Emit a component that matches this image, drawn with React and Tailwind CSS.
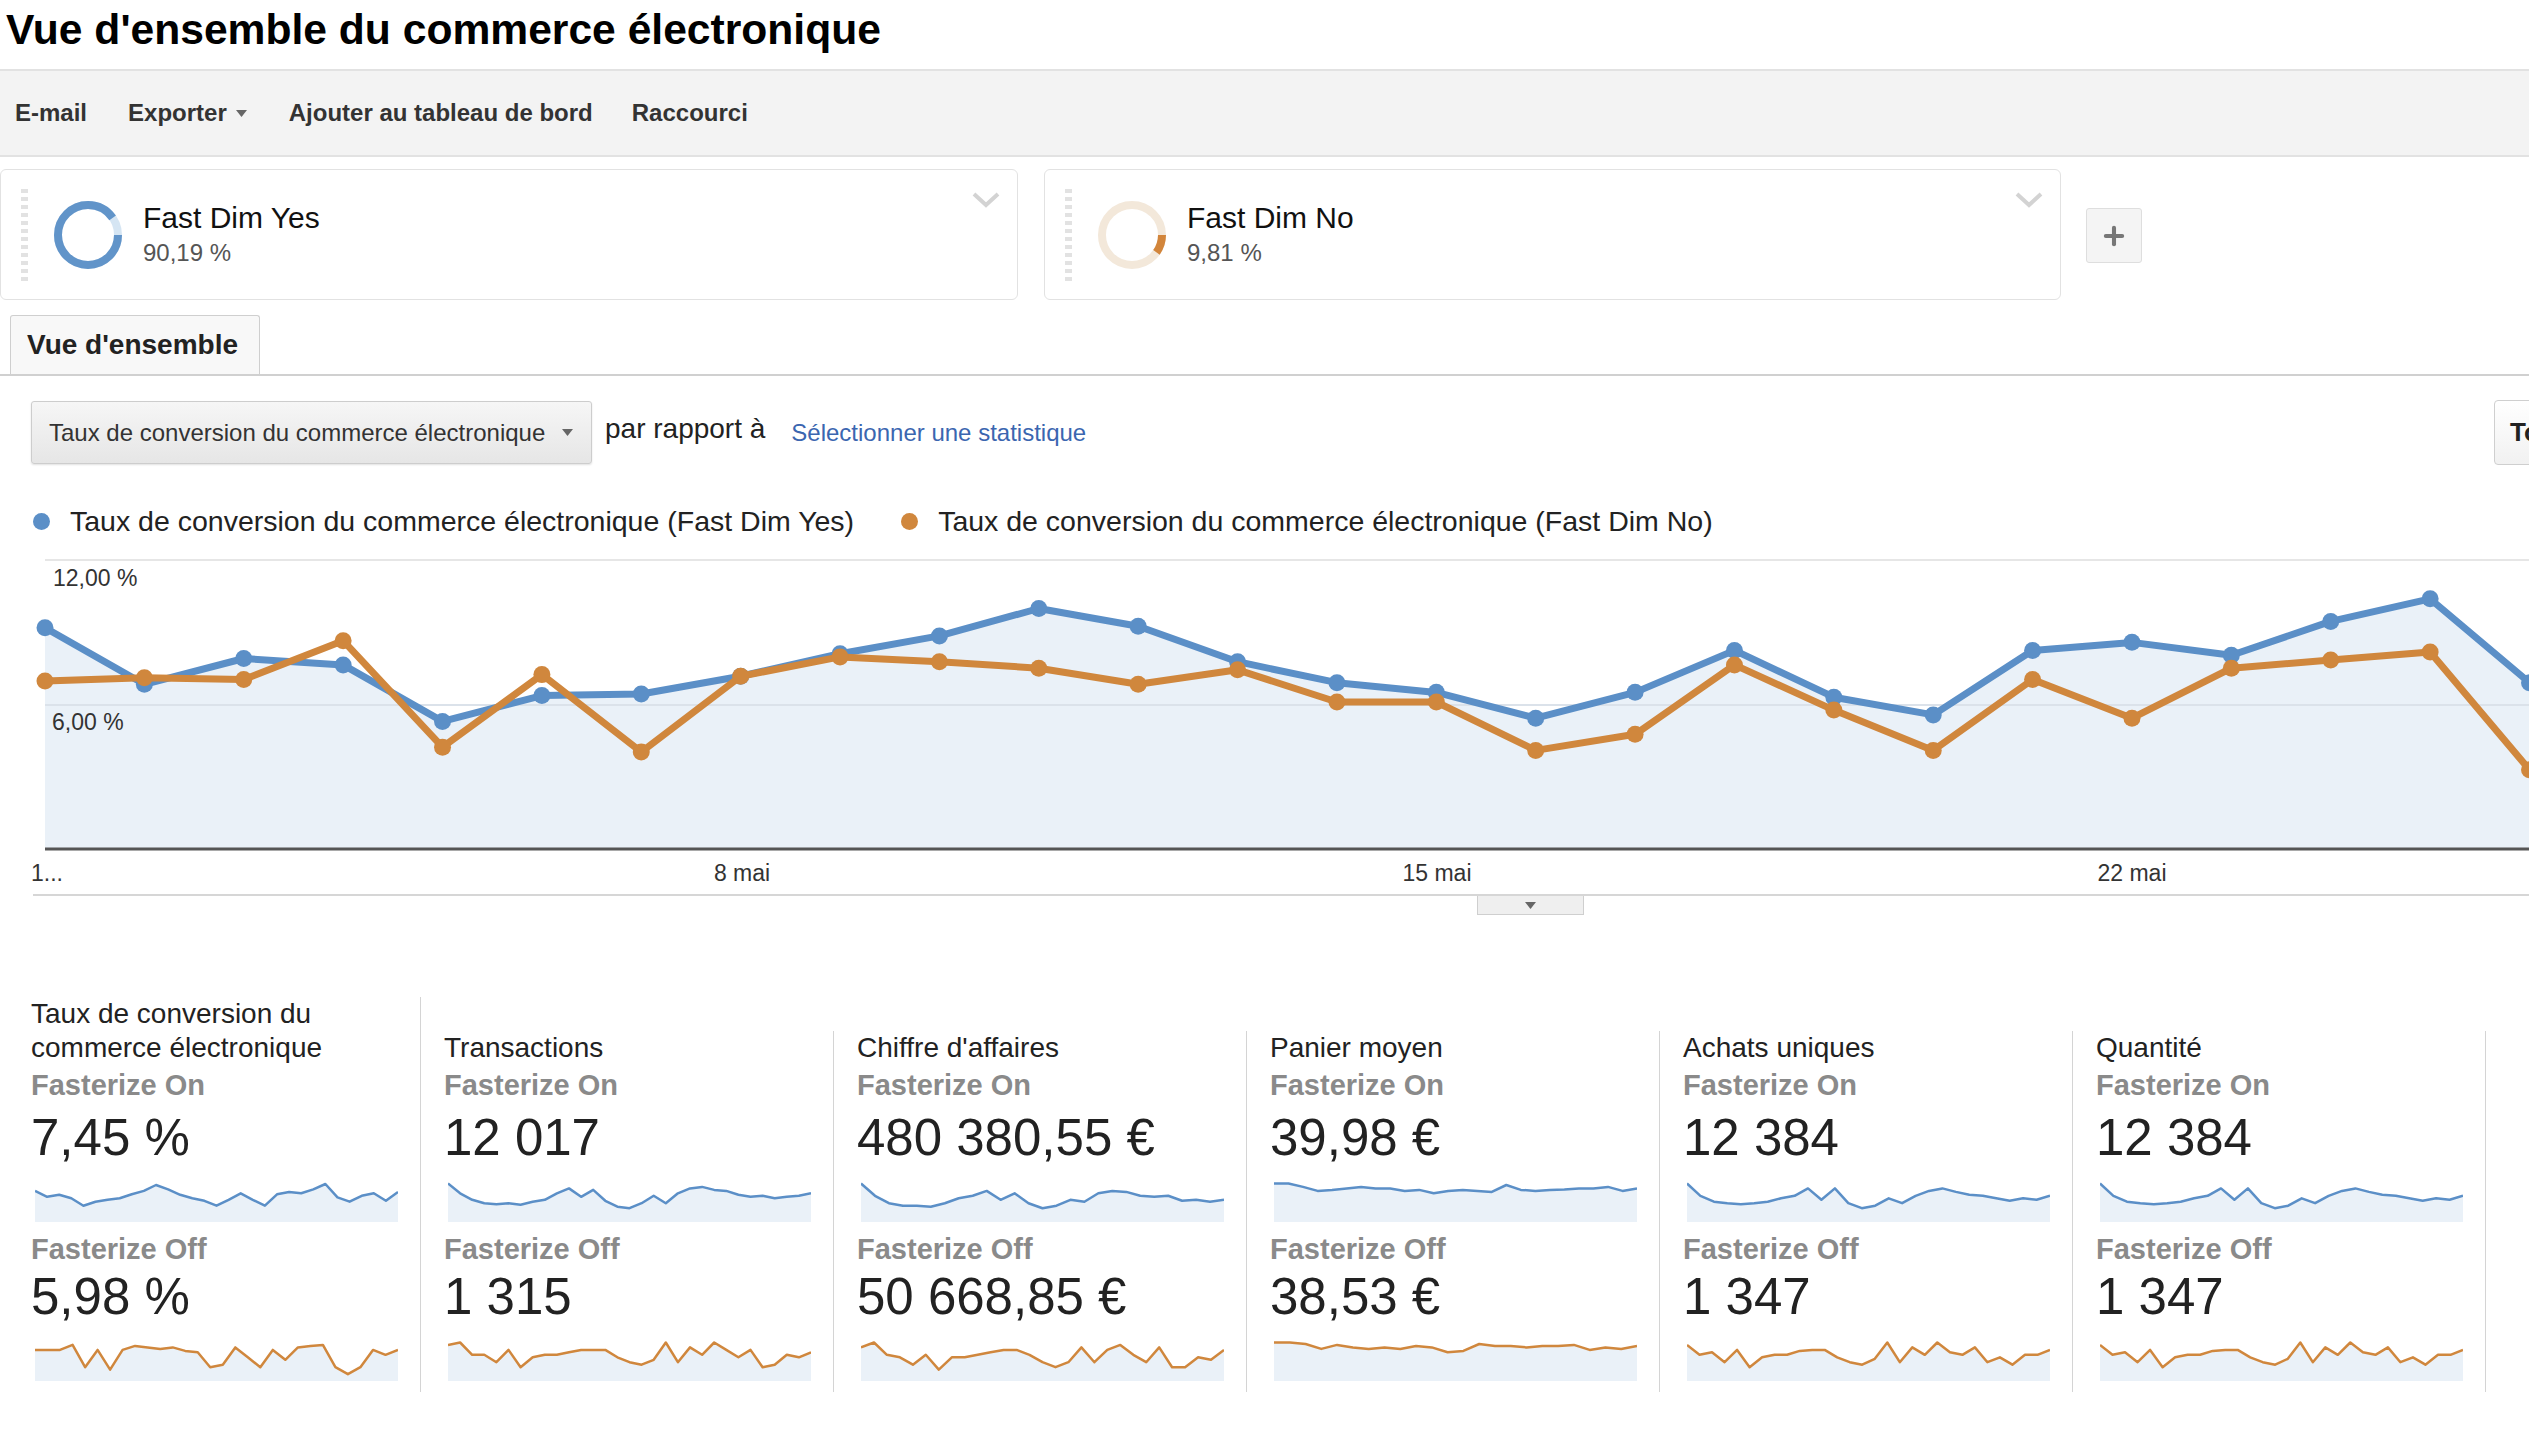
import { Plus } from 'lucide-react';

const BLUE = '#5b8fc7';
const ORANGE = '#d0873d';
const FILL = '#eaf1f8';

// y positions read off the reference (shrunk scale), mapped to chart px
const MAIN_BLUE = [388, 423, 407, 411, 446, 430, 429, 418, 404, 393, 376, 387, 409, 422, 428, 444, 428, 402, 431, 442, 402, 397, 405, 384, 370, 422];
const MAIN_ORANGE = [421, 419, 420, 396, 462, 417, 465, 418, 406, 409, 413, 423, 414, 434, 434, 464, 454, 411, 439, 464, 420, 444, 413, 408, 403, 476];

const toX = (i) => 45 + i * 99.38;
const toY = (s) => s * 1.613 - 556;
const BASE = 291;

const CARDS = [
  {
    title: 'Taux de conversion du commerce électronique',
    on: '7,45 %',
    off: '5,98 %',
    a: [0.2, 0.32, 0.28, 0.35, 0.5, 0.42, 0.38, 0.35, 0.27, 0.2, 0.08, 0.17, 0.28, 0.35, 0.4, 0.5, 0.38, 0.25, 0.38, 0.5, 0.27, 0.22, 0.25, 0.17, 0.06, 0.33, 0.42, 0.3, 0.25, 0.4, 0.22],
    b: [0.2, 0.2, 0.2, 0.1, 0.55, 0.2, 0.6, 0.2, 0.12, 0.15, 0.18, 0.15, 0.22, 0.25, 0.55, 0.5, 0.15, 0.35, 0.55, 0.2, 0.4, 0.15, 0.12, 0.1, 0.55, 0.7, 0.55, 0.2, 0.3, 0.2],
  },
  {
    title: 'Transactions',
    on: '12 017',
    off: '1 315',
    a: [0.05, 0.25, 0.38, 0.45, 0.47, 0.45, 0.48, 0.42, 0.38, 0.25, 0.15, 0.32, 0.18, 0.4, 0.52, 0.55, 0.45, 0.3, 0.45, 0.25, 0.15, 0.12, 0.18, 0.2, 0.28, 0.32, 0.3, 0.35, 0.32, 0.3, 0.25],
    b: [0.1, 0.05, 0.3, 0.3, 0.45, 0.2, 0.55, 0.35, 0.3, 0.3, 0.25, 0.2, 0.2, 0.2, 0.35, 0.45, 0.5, 0.4, 0.05, 0.45, 0.15, 0.3, 0.05, 0.2, 0.35, 0.2, 0.55, 0.5, 0.3, 0.35, 0.25],
  },
  {
    title: "Chiffre d'affaires",
    on: '480 380,55 €',
    off: '50 668,85 €',
    a: [0.05, 0.3, 0.45, 0.5, 0.5, 0.52, 0.45, 0.35, 0.3, 0.2, 0.38, 0.25, 0.45, 0.55, 0.5, 0.38, 0.42, 0.25, 0.2, 0.22, 0.3, 0.32, 0.3, 0.4, 0.38, 0.42, 0.38],
    b: [0.15, 0.05, 0.3, 0.35, 0.5, 0.3, 0.6, 0.35, 0.35, 0.3, 0.25, 0.2, 0.2, 0.3, 0.45, 0.55, 0.45, 0.15, 0.45, 0.2, 0.1, 0.3, 0.45, 0.15, 0.55, 0.55, 0.35, 0.4, 0.2],
  },
  {
    title: 'Panier moyen',
    on: '39,98 €',
    off: '38,53 €',
    a: [0.05, 0.05, 0.12, 0.2, 0.18, 0.15, 0.12, 0.15, 0.15, 0.2, 0.18, 0.25, 0.2, 0.18, 0.2, 0.22, 0.08, 0.18, 0.2, 0.18, 0.17, 0.15, 0.15, 0.12, 0.2, 0.15],
    b: [0.05, 0.05, 0.08, 0.18, 0.1, 0.15, 0.18, 0.15, 0.18, 0.12, 0.15, 0.25, 0.22, 0.08, 0.12, 0.12, 0.15, 0.12, 0.12, 0.1, 0.2, 0.15, 0.18, 0.12],
  },
  {
    title: 'Achats uniques',
    on: '12 384',
    off: '1 347',
    a: [0.05, 0.3, 0.42, 0.45, 0.47, 0.45, 0.42, 0.35, 0.3, 0.15, 0.38, 0.15, 0.45, 0.55, 0.5, 0.35, 0.45, 0.3, 0.2, 0.15, 0.22, 0.28, 0.3, 0.35, 0.4, 0.35, 0.38, 0.3],
    b: [0.1, 0.3, 0.25, 0.45, 0.2, 0.55, 0.35, 0.3, 0.3, 0.22, 0.2, 0.2, 0.35, 0.45, 0.5, 0.38, 0.05, 0.45, 0.15, 0.3, 0.05, 0.25, 0.3, 0.15, 0.45, 0.35, 0.5, 0.3, 0.3, 0.2],
  },
  {
    title: 'Quantité',
    on: '12 384',
    off: '1 347',
    a: [0.05, 0.3, 0.42, 0.45, 0.47, 0.45, 0.42, 0.35, 0.3, 0.15, 0.38, 0.15, 0.45, 0.55, 0.5, 0.35, 0.45, 0.3, 0.2, 0.15, 0.22, 0.28, 0.3, 0.35, 0.4, 0.35, 0.38, 0.3],
    b: [0.1, 0.3, 0.25, 0.45, 0.2, 0.55, 0.35, 0.3, 0.3, 0.22, 0.2, 0.2, 0.35, 0.45, 0.5, 0.38, 0.05, 0.45, 0.15, 0.3, 0.05, 0.25, 0.3, 0.15, 0.45, 0.35, 0.5, 0.3, 0.3, 0.2],
  },
];

const Caret = ({ className = '' }) => (
  <svg width="11" height="7" viewBox="0 0 11 7" className={className}>
    <path d="M0 0h11L5.5 7z" fill="#666" />
  </svg>
);

const Donut = ({ main, rest, arc }) => (
  <svg width="68" height="68" viewBox="0 0 68 68">
    <circle cx="34" cy="34" r="30" fill="none" stroke={rest} strokeWidth="8" />
    <circle cx="34" cy="34" r="30" fill="none" stroke={main} strokeWidth="8" strokeDasharray={`${arc} 190`} />
  </svg>
);

const Segment = ({ name, pct, donut, className = '' }) => (
  <div className={`flex h-[131px] shrink-0 items-center rounded-[6px] border border-[#e2e2e2] ${className}`}>
    <div className="ml-[20px] flex flex-col gap-[4px]">
      {Array.from({ length: 12 }).map((_, i) => (
        <div key={i} className="h-[4px] w-[7px] bg-[#e2e2e2]" />
      ))}
    </div>
    <div className="ml-[26px]">{donut}</div>
    <div className="ml-[21px]">
      <div className="text-[30px] leading-[36px] text-[#111]">{name}</div>
      <div className="text-[24px] leading-[34px] text-[#555]">{pct}</div>
    </div>
    <svg width="30" height="18" viewBox="0 0 30 18" className="mr-[16px] ml-auto mt-[-70px]">
      <polyline points="3,3 15,14 27,3" fill="none" stroke="#d3d3d3" strokeWidth="4" />
    </svg>
  </div>
);

const Spark = ({ data, color }) => {
  const w = 363;
  const h = 44;
  const pts = data.map((v, i) => [(i / (data.length - 1)) * w, 3 + Math.min(v * 1.3, 0.9) * (h - 6)]);
  const line = pts.map((p) => `${p[0].toFixed(1)},${p[1].toFixed(1)}`).join(' ');
  return (
    <svg width={w} height={h} viewBox={`0 0 ${w} ${h}`} className="ml-[4px] block">
      <polygon points={`${line} ${w},${h} 0,${h}`} fill={FILL} />
      <polyline points={line} fill="none" stroke={color} strokeWidth="2.5" strokeLinejoin="round" />
    </svg>
  );
};

const MainChart = () => {
  const bluePts = MAIN_BLUE.map((s, i) => [toX(i), toY(s)]);
  const orangePts = MAIN_ORANGE.map((s, i) => [toX(i), toY(s)]);
  const str = (pts) => pts.map((p) => `${p[0].toFixed(1)},${p[1].toFixed(1)}`).join(' ');
  const last = bluePts[bluePts.length - 1][0];
  return (
    <svg width="2529" height="336" viewBox="0 0 2529 336" className="block">
      <line x1="45" y1="2" x2="2529" y2="2" stroke="#e6e6e6" strokeWidth="2" />
      <polygon points={`${str(bluePts)} ${last},${BASE} 45,${BASE}`} fill={FILL} />
      <line x1="45" y1="147" x2="2529" y2="147" stroke="#dbe2ea" strokeWidth="2" />
      <line x1="45" y1={BASE} x2="2529" y2={BASE} stroke="#555" strokeWidth="3" />
      <text x="53" y="28" fontSize="23" fill="#333">12,00 %</text>
      <text x="52" y="172" fontSize="23" fill="#333">6,00 %</text>
      <polyline points={str(bluePts)} fill="none" stroke={BLUE} strokeWidth="7" strokeLinejoin="round" />
      {bluePts.map((p, i) => (
        <circle key={`b${i}`} cx={p[0]} cy={p[1]} r="8.5" fill={BLUE} />
      ))}
      <polyline points={str(orangePts)} fill="none" stroke={ORANGE} strokeWidth="7" strokeLinejoin="round" />
      {orangePts.map((p, i) => (
        <circle key={`o${i}`} cx={p[0]} cy={p[1]} r="8.5" fill={ORANGE} />
      ))}
      <text x="31" y="323" fontSize="23" fill="#333">1...</text>
      <text x="742" y="323" fontSize="23" fill="#333" textAnchor="middle">8 mai</text>
      <text x="1437" y="323" fontSize="23" fill="#333" textAnchor="middle">15 mai</text>
      <text x="2132" y="323" fontSize="23" fill="#333" textAnchor="middle">22 mai</text>
    </svg>
  );
};

const Scorecard = ({ card }) => (
  <div className="flex w-[413px] shrink-0 flex-col border-r border-[#d4d4d4] pl-[23px] pr-[20px] pb-[11px]">
    <div className="text-[28px] leading-[34px] text-[#222]">{card.title}</div>
    <div className="text-[29px] font-bold leading-[40px] text-[#8a8a8a]">Fasterize On</div>
    <div className="mt-[5px] text-[51px] leading-[56px] text-[#222]">{card.on}</div>
    <div className="mt-[12px]">
      <Spark data={card.a} color={BLUE} />
    </div>
    <div className="mt-[7px] text-[29px] font-bold leading-[40px] text-[#8a8a8a]">Fasterize Off</div>
    <div className="text-[51px] leading-[56px] text-[#222]">{card.off}</div>
    <div className="mt-[12px]">
      <Spark data={card.b} color={ORANGE} />
    </div>
  </div>
);

export default function App() {
  return (
    <div className="w-full overflow-hidden bg-white font-['Liberation_Sans',Arial,sans-serif] text-[#222]">
      <h1 className="h-[69px] pl-[6px] text-[42.6px] font-bold leading-[58px] text-black">
        Vue d'ensemble du commerce électronique
      </h1>

      {/* toolbar */}
      <div className="flex h-[88px] items-center border-y-2 border-[#e2e2e2] bg-[#f3f3f3] pl-[15px] text-[24px] font-bold text-[#333]">
        <span>E-mail</span>
        <span className="ml-[41px] flex items-center gap-[9px]">
          Exporter <Caret />
        </span>
        <span className="ml-[42px]">Ajouter au tableau de bord</span>
        <span className="ml-[39px]">Raccourci</span>
      </div>

      {/* segments */}
      <div className="mt-[12px] flex items-start">
        <Segment
          className="w-[1018px]"
          name="Fast Dim Yes"
          pct="90,19 %"
          donut={<Donut main="#6194c9" rest="#d5e5f3" arc={170} />}
        />
        <Segment
          className="ml-[26px] w-[1017px]"
          name="Fast Dim No"
          pct="9,81 %"
          donut={<Donut main="#d2853b" rest="#f3e8da" arc={18.5} />}
        />
        <div className="ml-[25px] mt-[39px] flex h-[55px] w-[56px] items-center justify-center rounded-[3px] border border-[#dedede] bg-[#f4f4f4]">
          <Plus size={28} strokeWidth={3.5} color="#777" />
        </div>
      </div>

      {/* tab */}
      <div className="mt-[15px] border-b-2 border-[#d0d0d0]">
        <div className="ml-[10px] flex h-[59px] w-[250px] items-center rounded-t-[3px] border border-b-0 border-[#cfcfcf] bg-[#f8f8f8] pl-[16px] text-[28px] font-bold text-[#222]">
          Vue d'ensemble
        </div>
      </div>

      {/* controls */}
      <div className="mt-[24px] flex h-[65px] items-center">
        <div className="ml-[31px] flex h-[63px] w-[561px] items-center justify-between rounded-[3px] border border-[#cdcdcd] bg-gradient-to-b from-[#f6f6f6] to-[#e6e6e6] pl-[17px] pr-[18px] text-[24px] text-[#333] shadow-[0_1px_2px_rgba(0,0,0,0.12)]">
          <span>Taux de conversion du commerce électronique</span>
          <Caret />
        </div>
        <span className="ml-[13px] mt-[-8px] text-[28px] text-[#222]">par rapport à</span>
        <span className="ml-[26px] text-[24px] text-[#3b66b0]">Sélectionner une statistique</span>
        <div className="ml-auto mr-[-80px] flex h-[65px] w-[115px] shrink-0 items-center rounded-[4px] border border-[#cfcfcf] bg-gradient-to-b from-white to-[#f1f1f1] pl-[15px] text-[26px] font-bold text-[#222]">
          Tout
        </div>
      </div>

      {/* legend */}
      <div className="mt-[36px] flex h-[40px] items-center text-[28.5px] text-[#222]">
        <span className="ml-[33px] h-[17px] w-[17px] rounded-full" style={{ backgroundColor: BLUE }} />
        <span className="ml-[20px]">Taux de conversion du commerce électronique (Fast Dim Yes)</span>
        <span className="ml-[47px] h-[17px] w-[17px] rounded-full" style={{ backgroundColor: ORANGE }} />
        <span className="ml-[20px]">Taux de conversion du commerce électronique (Fast Dim No)</span>
      </div>

      {/* chart */}
      <div className="mt-[17px]">
        <MainChart />
      </div>
      <div className="ml-[33px] border-t-2 border-[#d6d6d6]" />
      <div className="ml-[1477px] flex h-[19px] w-[107px] items-center justify-center border border-t-0 border-[#cfcfcf] bg-[#efefef]">
        <Caret />
      </div>

      {/* scorecards */}
      <div className="mt-[82px] flex items-end pl-[8px]">
        {CARDS.map((c) => (
          <Scorecard key={c.title} card={c} />
        ))}
      </div>
      <div className="h-[49px]" />
    </div>
  );
}
